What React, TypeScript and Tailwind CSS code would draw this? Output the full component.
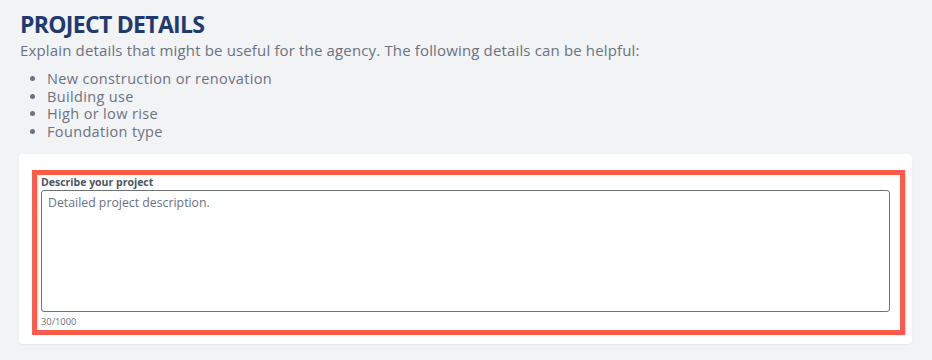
import React from "react";

export default function App() {
  const items = [
    "New construction or renovation",
    "Building use",
    "High or low rise",
    "Foundation type",
  ];
  return (
    <div
      className="min-h-[360px] w-full bg-[#f2f3f5] px-[19px] pt-[8px] pb-4"
      style={{ fontFamily: '"Open Sans", "Noto Sans", sans-serif' }}
    >
      <h1 className="pl-[1px] text-[23px] font-bold leading-[32px] tracking-[-0.7px] text-[#1f3a70]">
        PROJECT DETAILS
      </h1>
      <p className="mt-[0px] pl-[1px] text-[15px] leading-[20px] tracking-[0.15px] text-[#6b7280]">
        Explain details that might be useful for the agency. The following details can be helpful:
      </p>
      <ul className="mt-[10px] list-disc pl-[28px] text-[14.5px] leading-[17.5px] tracking-[0.35px] text-[#6b7280] marker:text-[#6b7280]">
        {items.map((t) => (
          <li key={t}>{t}</li>
        ))}
      </ul>
      <div className="mt-[14px] w-[893px] rounded-[4px] bg-white pt-[16px] pb-[9px] pl-[13px] pr-[7px] shadow-[0_1px_2px_rgba(0,0,0,0.06)]">
        <div className="border-[5px] border-[#ff5a4a] pl-[4px] pr-[10px] pt-[0px] pb-[2px]">
          <label className="block text-[10.5px] font-bold leading-[15px] text-[#4b5563]">
            Describe your project
          </label>
          <textarea
            className="block h-[122px] w-full resize-none rounded-[3px] border border-[#6b7280] bg-white px-[6px] py-[3px] text-[12.3px] leading-[18px] text-[#6b7280] placeholder:text-[#6b7280] outline-none"
            placeholder="Detailed project description."
          />
          <div className="mt-[3px] text-[9.3px] leading-[13px] text-[#6b7280]">30/1000</div>
        </div>
      </div>
    </div>
  );
}
